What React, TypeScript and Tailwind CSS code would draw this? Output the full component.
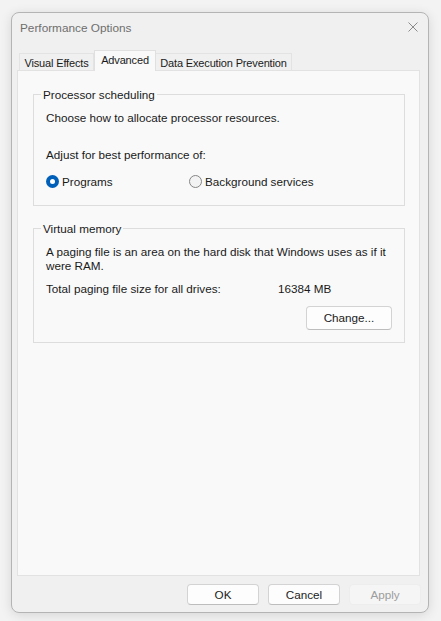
import React from 'react';

const font = "font-['Segoe_UI','Liberation_Sans','Noto_Sans',sans-serif]";

function Radio({ checked, label }: { checked?: boolean; label: string }) {
  return (
    <label className="flex items-center gap-[3px] leading-[15px]">
      {checked ? (
        <span className="w-[13px] h-[13px] rounded-full bg-[#005fb8] flex items-center justify-center">
          <span className="w-[5px] h-[5px] rounded-full bg-white" />
        </span>
      ) : (
        <span className="w-[13px] h-[13px] rounded-full border border-[#858585] bg-[#f3f3f3]" />
      )}
      <span>{label}</span>
    </label>
  );
}

function Btn({ children, disabled }: { children: React.ReactNode; disabled?: boolean }) {
  return (
    <button
      className={
        disabled
          ? 'w-[72px] h-[21px] rounded-[4px] border border-[#ededed] bg-[#f5f5f5] text-[#9d9d9d] leading-none'
          : 'w-[72px] h-[21px] rounded-[4px] border border-[#d3d3d3] border-b-[#bdbdbd] bg-[#fdfdfd] text-[#1b1b1b] leading-none'
      }
    >
      {children}
    </button>
  );
}

function Group({ title, className, children }: { title: string; className: string; children: React.ReactNode }) {
  return (
    <div className={`relative w-[372px] border border-[#dddddd] pl-[12px] ${className}`}>
      <span className="absolute left-[7px] top-[-8px] px-[2px] leading-[15px] bg-[#f9f9f9]">{title}</span>
      {children}
    </div>
  );
}

export default function App() {
  return (
    <div className={`min-h-[621px] w-[441px] bg-[#f3f3f3] pt-[12px] pl-[11px] ${font} text-[11.7px] text-[#1a1a1a]`}>
      <div className="w-[418px] h-[601px] rounded-[8px] border border-[#b4b4b4] bg-[#f0f0f0] shadow-[0_2px_12px_rgba(0,0,0,0.12)] flex flex-col">
        {/* title bar */}
        <div className="h-[37px] flex items-start justify-between pl-[8px] pr-[10px] pt-[7px]">
          <span className="text-[#6e6e6e] text-[11.8px] leading-[16px]">Performance Options</span>
          <svg width="10" height="10" viewBox="0 0 10 10" className="mt-[2px]">
            <path d="M0.5 0.5L9.5 9.5M9.5 0.5L0.5 9.5" stroke="#8a8a8a" strokeWidth="1" />
          </svg>
        </div>

        {/* tabs */}
        <div className="flex items-end pl-[7px] h-[20px] text-[11px] tracking-[-0.15px]">
          <div className="w-[75px] h-[18px] flex items-center justify-center border border-b-0 border-[#e3e3e3] bg-[#f0f0f0] mb-[-1px] leading-none pt-[1px]">
            Visual Effects
          </div>
          <div className="relative z-10 w-[62px] h-[21px] flex items-center justify-center border border-b-0 border-[#e0e0e0] bg-[#f9f9f9] mb-[-1px] leading-none pb-[1px]">
            Advanced
          </div>
          <div className="w-[136px] h-[18px] flex items-center justify-center border border-b-0 border-l-0 border-[#e3e3e3] bg-[#f0f0f0] mb-[-1px] leading-none pt-[1px]">
            Data Execution Prevention
          </div>
        </div>

        {/* panel */}
        <div className="ml-[5px] w-[403px] h-[506px] border border-[#e2e2e2] bg-[#f9f9f9] pt-[23px] pl-[15px]">
          <Group title="Processor scheduling" className="h-[112px] pt-[15px]">
            <div className="leading-[15px]">Choose how to allocate processor resources.</div>
            <div className="leading-[15px] mt-[22px]">Adjust for best performance of:</div>
            <div className="flex mt-[12px]">
              <div className="w-[143px]">
                <Radio checked label="Programs" />
              </div>
              <Radio label="Background services" />
            </div>
          </Group>

          <Group title="Virtual memory" className="mt-[22px] h-[115px] pt-[16px]">
            <div className="leading-[14px] w-[350px]">
              A paging file is an area on the hard disk that Windows uses as if it were RAM.
            </div>
            <div className="flex mt-[9px] leading-[14px]">
              <span className="w-[232px]">Total paging file size for all drives:</span>
              <span>16384 MB</span>
            </div>
            <div className="flex justify-end pr-[12px] mt-[10px]">
              <button className="w-[86px] h-[24px] rounded-[4px] border border-[#d3d3d3] border-b-[#bdbdbd] bg-[#fdfdfd] leading-none">
                Change...
              </button>
            </div>
          </Group>
        </div>

        {/* footer buttons */}
        <div className="flex justify-end gap-[9px] pr-[7px] mt-[8px]">
          <Btn>OK</Btn>
          <Btn>Cancel</Btn>
          <Btn disabled>Apply</Btn>
        </div>
      </div>
    </div>
  );
}
